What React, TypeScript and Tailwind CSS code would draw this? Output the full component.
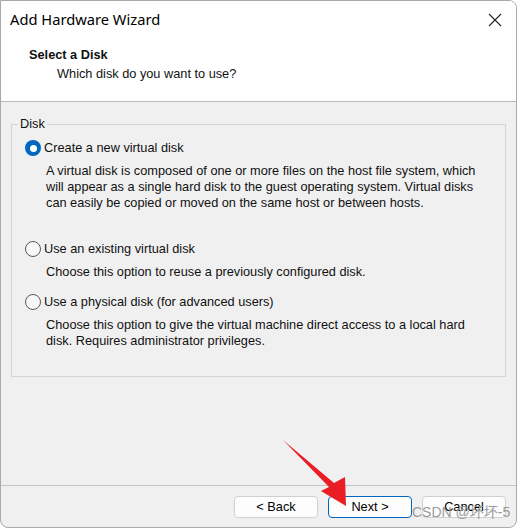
import React from 'react';

// Classic "Add Hardware Wizard" dialog, disk selection step.

const ui = { fontFamily: '"Liberation Sans", Arial, sans-serif' };
const title = { fontFamily: '"Noto Sans", "Open Sans", sans-serif' };

function Radio({ checked }: { checked?: boolean }) {
  if (checked) {
    return (
      <span className="flex h-4 w-4 shrink-0 items-center justify-center rounded-full bg-[#0067c0]">
        <span className="h-[7px] w-[7px] rounded-full bg-white" />
      </span>
    );
  }
  return <span className="h-4 w-4 shrink-0 rounded-full border border-[#5a5a5a] bg-[#f8f8f8]" />;
}

function Option({ label, checked, lines, className }: { label: string; checked?: boolean; lines: string[]; className?: string }) {
  return (
    <div className={className}>
      <label className="flex h-4 items-center gap-[3px]">
        <Radio checked={checked} />
        <span className="leading-4">{label}</span>
      </label>
      <div className="mt-[7px] pl-[21px] leading-4">
        {lines.map((l) => (
          <div key={l}>{l}</div>
        ))}
      </div>
    </div>
  );
}

function Button({ children, primary }: { children: React.ReactNode; primary?: boolean }) {
  return (
    <button
      className={`h-[22px] w-[84px] rounded-[4px] border bg-[#fdfdfd] text-[12.75px] text-black ${primary ? 'border-[#0067c0]' : 'border-[#d0d0d0]'}`}
    >
      {children}
    </button>
  );
}

export default function App() {
  return (
    <div className="relative h-[528px] w-[518px] bg-white" style={ui}>
      <div className="flex h-[528px] w-[517px] flex-col overflow-hidden rounded-tr-[8px] rounded-b-[8px] border border-[#a9a9a9] bg-[#f0f0f0] text-[12.75px] text-[#111]">
        {/* Title + header */}
        <div className="h-[101px] border-b border-[#b9b9b9] bg-white">
          <div className="flex h-[36px] items-center justify-between pl-[9px] pr-[14px]">
            <span className="text-[14.7px] text-black" style={title}>Add Hardware Wizard</span>
            <svg width="14" height="14" viewBox="0 0 14 14" className="mt-[1px]">
              <path d="M1 1 L13 13 M13 1 L1 13" stroke="#222" strokeWidth="1.1" />
            </svg>
          </div>
          <div className="pl-[28px] pt-[10px] font-bold leading-4">Select a Disk</div>
          <div className="pl-[56px] pt-[3px] leading-4">Which disk do you want to use?</div>
        </div>

        {/* Body */}
        <div className="flex-1 px-[10px] pt-[14px]">
          <fieldset className="h-[261px] border border-[#d5d5d5] px-[13px]">
            <legend className="ml-[-7px] px-[2px] leading-4">Disk</legend>
            <Option
              className="mt-[8px]"
              checked
              label="Create a new virtual disk"
              lines={[
                'A virtual disk is composed of one or more files on the host file system, which',
                'will appear as a single hard disk to the guest operating system. Virtual disks',
                'can easily be copied or moved on the same host or between hosts.',
              ]}
            />
            <Option
              className="mt-[30px]"
              label="Use an existing virtual disk"
              lines={['Choose this option to reuse a previously configured disk.']}
            />
            <Option
              className="mt-[14px]"
              label="Use a physical disk (for advanced users)"
              lines={[
                'Choose this option to give the virtual machine direct access to a local hard',
                'disk. Requires administrator privileges.',
              ]}
            />
          </fieldset>
        </div>

        {/* Footer */}
        <div className="flex h-[42px] items-start justify-end gap-[10px] border-t border-[#c4c4c4] pr-[10px] pt-[10px]">
          <Button>&lt; Back</Button>
          <Button primary>Next &gt;</Button>
          <Button>Cancel</Button>
        </div>
      </div>

      {/* Annotation arrow */}
      <svg className="pointer-events-none absolute left-0 top-0" width="518" height="528">
        <polygon points="283,440 334,483 345,477 346,506 321,491 329,487" fill="#ea1c24" />
      </svg>

      {/* Watermark */}
      <span
        className="pointer-events-none absolute left-[412px] top-[502px] text-[14px] text-[#9a9a9a]"
        style={{ fontFamily: '"Liberation Sans", "Noto Sans CJK SC", sans-serif' }}
      >
        CSDN @坏坏-5
      </span>
    </div>
  );
}
